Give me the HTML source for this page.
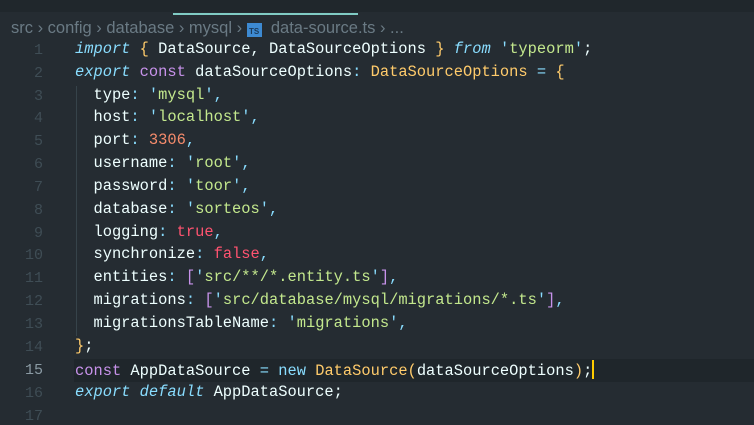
<!DOCTYPE html>
<html><head><meta charset="utf-8"><style>
body{margin:0;width:754px;height:425px;background:#252c32;overflow:hidden;position:relative;font-family:"Liberation Mono",monospace;}
.tabs{position:absolute;left:0;top:0;width:754px;height:12px;background:#20272c;}
.tabline{position:absolute;left:173px;top:13px;width:185px;height:2px;background:#80cbc4;}
.bc{position:absolute;left:11px;top:19px;font-family:"Liberation Sans",sans-serif;font-size:16.5px;color:#6a7a84;white-space:pre;}
.ts{display:inline-block;background:#3d8ad2;color:#1b3a5a;font-size:8px;width:15px;height:14px;line-height:18px;text-align:center;vertical-align:-1px;font-weight:bold}
.ln{position:absolute;left:0;width:43px;text-align:right;color:#3f4d55;font-size:15px;}
.cl{position:absolute;left:75px;font-size:15.4px;color:#eeffff;white-space:pre;}
.hl{position:absolute;left:74px;top:359px;width:680px;height:23px;background:#1f262b;}
.guide{position:absolute;left:76px;top:86px;width:1px;height:250px;background:#36434a;}
.k{color:#89ddff;font-style:italic}.c{color:#c792ea}.y{color:#ffcb6b}.s{color:#c3e88d}.n{color:#f78c6c}.b{color:#ff5370}.p{color:#89ddff}.br{color:#c792ea}
.cur{display:inline-block;width:2px;height:19px;background:#ffcc00;vertical-align:-4px}
</style></head><body>
<div class="tabs"></div><div class="tabline"></div>
<div class="bc">src › config › database › mysql › <span class="ts">TS</span>  data-source.ts › ...</div>
<div class="hl"></div><div class="guide"></div>
<div class="ln" style="top:42px">1</div><div class="cl" style="top:40px"><span class="k">import</span> <span class="y">{</span> DataSource, DataSourceOptions <span class="y">}</span> <span class="k">from</span> <span class="p">'</span><span class="s">typeorm</span><span class="p">'</span>;</div>
<div class="ln" style="top:65px">2</div><div class="cl" style="top:63px"><span class="k">export</span> <span class="c">const</span> dataSourceOptions<span class="p">:</span> <span class="y">DataSourceOptions</span> <span class="p">=</span> <span class="y">{</span></div>
<div class="ln" style="top:88px">3</div><div class="cl" style="top:86px">  type<span class="p">:</span> <span class="p">'</span><span class="s">mysql</span><span class="p">'</span><span class="p">,</span></div>
<div class="ln" style="top:110px">4</div><div class="cl" style="top:108px">  host<span class="p">:</span> <span class="p">'</span><span class="s">localhost</span><span class="p">'</span><span class="p">,</span></div>
<div class="ln" style="top:133px">5</div><div class="cl" style="top:131px">  port<span class="p">:</span> <span class="n">3306</span><span class="p">,</span></div>
<div class="ln" style="top:156px">6</div><div class="cl" style="top:154px">  username<span class="p">:</span> <span class="p">'</span><span class="s">root</span><span class="p">'</span><span class="p">,</span></div>
<div class="ln" style="top:179px">7</div><div class="cl" style="top:177px">  password<span class="p">:</span> <span class="p">'</span><span class="s">toor</span><span class="p">'</span><span class="p">,</span></div>
<div class="ln" style="top:202px">8</div><div class="cl" style="top:200px">  database<span class="p">:</span> <span class="p">'</span><span class="s">sorteos</span><span class="p">'</span><span class="p">,</span></div>
<div class="ln" style="top:225px">9</div><div class="cl" style="top:223px">  logging<span class="p">:</span> <span class="b">true</span><span class="p">,</span></div>
<div class="ln" style="top:247px">10</div><div class="cl" style="top:245px">  synchronize<span class="p">:</span> <span class="b">false</span><span class="p">,</span></div>
<div class="ln" style="top:270px">11</div><div class="cl" style="top:268px">  entities<span class="p">:</span> <span class="br">[</span><span class="p">'</span><span class="s">src/**/*.entity.ts</span><span class="p">'</span><span class="br">]</span><span class="p">,</span></div>
<div class="ln" style="top:293px">12</div><div class="cl" style="top:291px">  migrations<span class="p">:</span> <span class="br">[</span><span class="p">'</span><span class="s">src/database/mysql/migrations/*.ts</span><span class="p">'</span><span class="br">]</span><span class="p">,</span></div>
<div class="ln" style="top:316px">13</div><div class="cl" style="top:314px">  migrationsTableName<span class="p">:</span> <span class="p">'</span><span class="s">migrations</span><span class="p">'</span><span class="p">,</span></div>
<div class="ln" style="top:339px">14</div><div class="cl" style="top:337px"><span class="y">}</span>;</div>
<div class="ln" style="top:362px;color:#8a9aa3">15</div><div class="cl" style="top:360px"><span class="c">const</span> AppDataSource <span class="p">=</span> <span class="p">new</span> <span class="y">DataSource(</span>dataSourceOptions<span class="y">)</span>;<span class="cur"></span></div>
<div class="ln" style="top:385px">16</div><div class="cl" style="top:383px"><span class="k">export</span> <span class="k">default</span> AppDataSource;</div>
<div class="ln" style="top:408px">17</div>
</body></html>
